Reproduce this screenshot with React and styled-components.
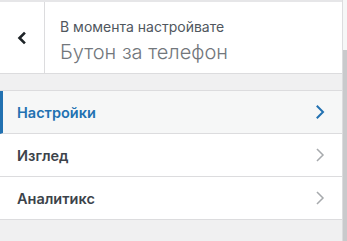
import React from "react";
import styled, { createGlobalStyle } from "styled-components";

const Global = createGlobalStyle`
  html, body { margin: 0; padding: 0; }
  body {
    background: #f0f0f1;
    font-family: Inter, "Noto Sans", sans-serif;
    -webkit-font-smoothing: antialiased;
  }
`;

const Frame = styled.div`
  display: flex;
  width: 347px;
  height: 241px;
  overflow: hidden;
`;

const Panel = styled.div`
  width: 342px;
  border-right: 1px solid #dcdcde;
  display: flex;
  flex-direction: column;
  background: #f0f0f1;
`;

const Scrollbar = styled.div`
  flex: 1;
  display: flex;
  flex-direction: column;
  background: #f6f7f7;
  &::after {
    content: "";
    margin-top: 50px;
    flex: 1;
    background: #c9cacc;
  }
`;

const Header = styled.div`
  display: flex;
  height: 71px;
  background: #fff;
  border-top: 2px solid #e6e6e8;
  border-bottom: 1px solid #dcdcde;
`;

const Back = styled.button`
  width: 45px;
  border: 0;
  border-right: 1px solid #dcdcde;
  background: #fff;
  display: flex;
  align-items: center;
  justify-content: center;
  padding: 0;
  color: #1d2327;
`;

const Titles = styled.div`
  display: flex;
  flex-direction: column;
  padding: 16px 0 0 15px;
  gap: 3px;
`;

const Small = styled.span`
  font-size: 14px;
  color: #50575e;
  line-height: 18px;
`;

const Big = styled.span`
  font-size: 20px;
  font-weight: 300;
  color: #72777c;
  line-height: 26px;
`;

const List = styled.ul`
  list-style: none;
  margin: 16px 0 0;
  padding: 0;
  border-top: 1px solid #dcdcde;
`;

const Row = styled.li`
  display: flex;
  align-items: center;
  justify-content: space-between;
  height: 42px;
  padding: 0 16px 0 ${p => (p.$active ? 14 : 17)}px;
  border-bottom: 1px solid #dcdcde;
  border-left: ${p => (p.$active ? "3px solid #2271b1" : "0")};
  background: ${p => (p.$active ? "#f6f7f7" : "#fff")};
  color: ${p => (p.$active ? "#2271b1" : "#3c434a")};
  font-size: 14.5px;
  font-weight: 600;
`;

const Chevron = ({ color, w = 2 }) => (
  <svg width="12" height="14" viewBox="0 0 12 14" fill="none">
    <path d="M3.5 1.5 L9 7 L3.5 12.5" stroke={color} strokeWidth={w} strokeLinecap="square" />
  </svg>
);

const BackIcon = () => (
  <svg width="12" height="14" viewBox="0 0 12 14" fill="none">
    <path d="M8 2.5 L3.5 7 L8 11.5" stroke="#1d2327" strokeWidth="2.6" strokeLinecap="square" />
  </svg>
);

const items = [
  { label: "Настройки", active: true },
  { label: "Изглед" },
  { label: "Аналитикс" },
];

export default function App() {
  return (
    <Frame lang="bg">
      <Global />
      <Panel>
        <Header>
          <Back aria-label="Назад"><BackIcon /></Back>
          <Titles>
            <Small>В момента настройвате</Small>
            <Big>Бутон за телефон</Big>
          </Titles>
        </Header>
        <List>
          {items.map(it => (
            <Row key={it.label} $active={it.active}>
              <span>{it.label}</span>
              <Chevron color={it.active ? "#2271b1" : "#a7aaad"} w={it.active ? 2 : 1.5} />
            </Row>
          ))}
        </List>
      </Panel>
      <Scrollbar />
    </Frame>
  );
}
